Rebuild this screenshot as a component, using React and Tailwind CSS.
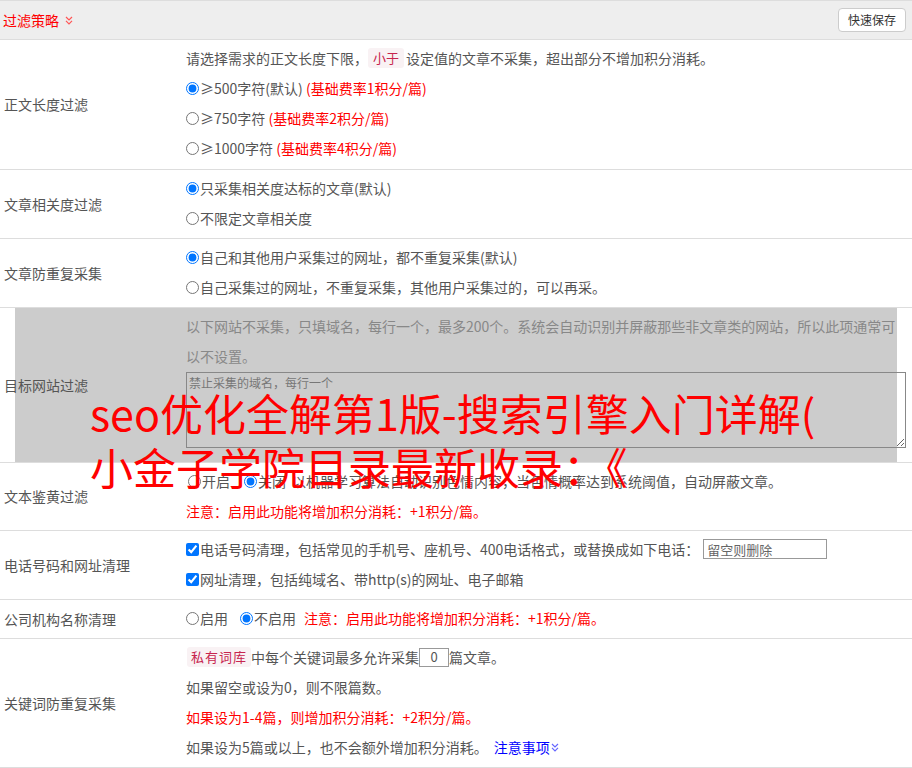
import React from "react";

function DblDown({ className }) {
  return (
    <svg viewBox="0 0 8 9" className={className} fill="none" stroke="currentColor" strokeWidth="1.2">
      <polyline points="1,1 4,4 7,1" />
      <polyline points="1,4.8 4,7.8 7,4.8" />
    </svg>
  );
}

function Row({ label, children, pb = "pb-[5px]" }) {
  return (
    <div className="relative z-10 flex border-b border-[#ddd]">
      <div className="w-[186px] shrink-0 pl-[4px] flex items-center">{label}</div>
      <div className={"flex-1 min-w-0 pt-[3px] pr-[6px] " + pb}>{children}</div>
    </div>
  );
}

function Line({ children, className = "" }) {
  return <div className={"h-[30px] flex items-center whitespace-nowrap " + className}>{children}</div>;
}

function Radio({ checked, name }) {
  return (
    <input
      type="radio"
      name={name}
      defaultChecked={checked}
      className="m-0 mr-px w-[13px] h-[13px] shrink-0"
    />
  );
}

function Check() {
  return <input type="checkbox" defaultChecked className="m-0 mr-px w-[13px] h-[13px] shrink-0" />;
}

export default function App() {
  return (
    <div className="relative w-full min-h-[768px] bg-white text-[14px] text-[#555] font-['Noto_Sans_CJK_SC',sans-serif] overflow-hidden">
      <div className="flex items-center justify-between h-[40px] bg-[#eee] border-t border-b border-[#ddd] pl-[3px] pr-[6px]">
        <div className="flex items-center text-[#f00]">
          <span>过滤策略</span>
          <DblDown className="w-[8px] h-[9px] ml-[6px] text-[#f55]" />
        </div>
        <button className="h-[24px] px-[9px] bg-white border border-[#ccc] rounded-[4px] text-[12px] text-[#333]">
          快速保存
        </button>
      </div>

      <div className="absolute left-[15px] top-[308px] w-[882px] h-[154px] bg-[#ccc] z-0" />

      <Row label="正文长度过滤" pb="pb-[6px]">
        <Line>
          请选择需求的正文长度下限，
          <span className="px-[5px] h-[20px] flex items-center rounded-[3px] bg-[#f9f2f4] text-[#c7254e] text-[13px]">小于</span>
          <span className="ml-[2px]">设定值的文章不采集，超出部分不增加积分消耗。</span>
        </Line>
        <Line>
          <Radio name="len" checked />≥500字符(默认)&nbsp;<span className="text-[#f00]">(基础费率1积分/篇)</span>
        </Line>
        <Line>
          <Radio name="len" />≥750字符&nbsp;<span className="text-[#f00]">(基础费率2积分/篇)</span>
        </Line>
        <Line>
          <Radio name="len" />≥1000字符&nbsp;<span className="text-[#f00]">(基础费率4积分/篇)</span>
        </Line>
      </Row>

      <Row label="文章相关度过滤">
        <Line>
          <Radio name="rel" checked />只采集相关度达标的文章(默认)
        </Line>
        <Line>
          <Radio name="rel" />不限定文章相关度
        </Line>
      </Row>

      <Row label="文章防重复采集">
        <Line>
          <Radio name="dup" checked />自己和其他用户采集过的网址，都不重复采集(默认)
        </Line>
        <Line>
          <Radio name="dup" />自己采集过的网址，不重复采集，其他用户采集过的，可以再采。
        </Line>
      </Row>

      <Row label="目标网站过滤">
        <p className="leading-[30px] text-[#888]">
          以下网站不采集，只填域名，每行一个，最多200个。系统会自动识别并屏蔽那些非文章类的网站，所以此项通常可以不设置。
        </p>
        <textarea
          className="block w-full h-[76px] mt-px mb-[9px] border border-[#888] bg-transparent text-[12px] leading-[16px] px-[2px] py-[2px] placeholder:text-[#777]"
          placeholder="禁止采集的域名，每行一个"
        />
      </Row>

      <Row label="文本鉴黄过滤" pb="pb-[4px]">
        <Line>
          <span className="ml-[2px]" />
          <Radio name="porn" />开启
          <span className="w-[14px]" />
          <Radio name="porn" checked />关闭
          <span className="w-[6px]" />
          以机器学习算法自动识别色情内容，当色情概率达到系统阈值，自动屏蔽文章。
        </Line>
        <Line className="text-[#f00]">注意：启用此功能将增加积分消耗：+1积分/篇。</Line>
      </Row>

      <Row label="电话号码和网址清理">
        <Line>
          <Check />电话号码清理，包括常见的手机号、座机号、400电话格式，或替换成如下电话：
          <input
            type="text"
            placeholder="留空则删除"
            className="ml-[4px] w-[124px] h-[20px] border border-[#999] text-[13px] px-[3px] placeholder:text-[#666] outline-none"
          />
        </Line>
        <Line>
          <Check />网址清理，包括纯域名、带http(s)的网址、电子邮箱
        </Line>
      </Row>

      <Row label="公司机构名称清理">
        <Line>
          <Radio name="org" />启用
          <span className="w-[12px]" />
          <Radio name="org" checked />不启用
          <span className="w-[8px]" />
          <span className="text-[#f00]">注意：启用此功能将增加积分消耗：+1积分/篇。</span>
        </Line>
      </Row>

      <Row label="关键词防重复采集">
        <Line>
          <span className="ml-px px-[4px] h-[20px] flex items-center rounded-[3px] bg-[#f9f2f4] text-[#c7254e] text-[13px] tracking-[1px]">私有词库</span>
          中每个关键词最多允许采集
          <input
            type="text"
            defaultValue="0"
            className="w-[30px] h-[19px] border border-[#999] text-center text-[13px] text-[#555] outline-none"
          />
          篇文章。
        </Line>
        <Line>如果留空或设为0，则不限篇数。</Line>
        <Line className="text-[#f00]">如果设为1-4篇，则增加积分消耗：+2积分/篇。</Line>
        <Line>
          如果设为5篇或以上，也不会额外增加积分消耗。
          <span className="ml-[6px] flex items-center text-[#00f]">
            注意事项
            <DblDown className="w-[8px] h-[9px] ml-px text-[#66f]" />
          </span>
        </Line>
      </Row>

      <div className="absolute left-[90px] top-[385px] z-20 text-[#f00] text-[43px] leading-[54px] whitespace-nowrap pointer-events-none">
        <div>seo优化全解第1版-搜索引擎入门详解(</div>
        <div>小金子学院目录最新收录：《</div>
      </div>
    </div>
  );
}
